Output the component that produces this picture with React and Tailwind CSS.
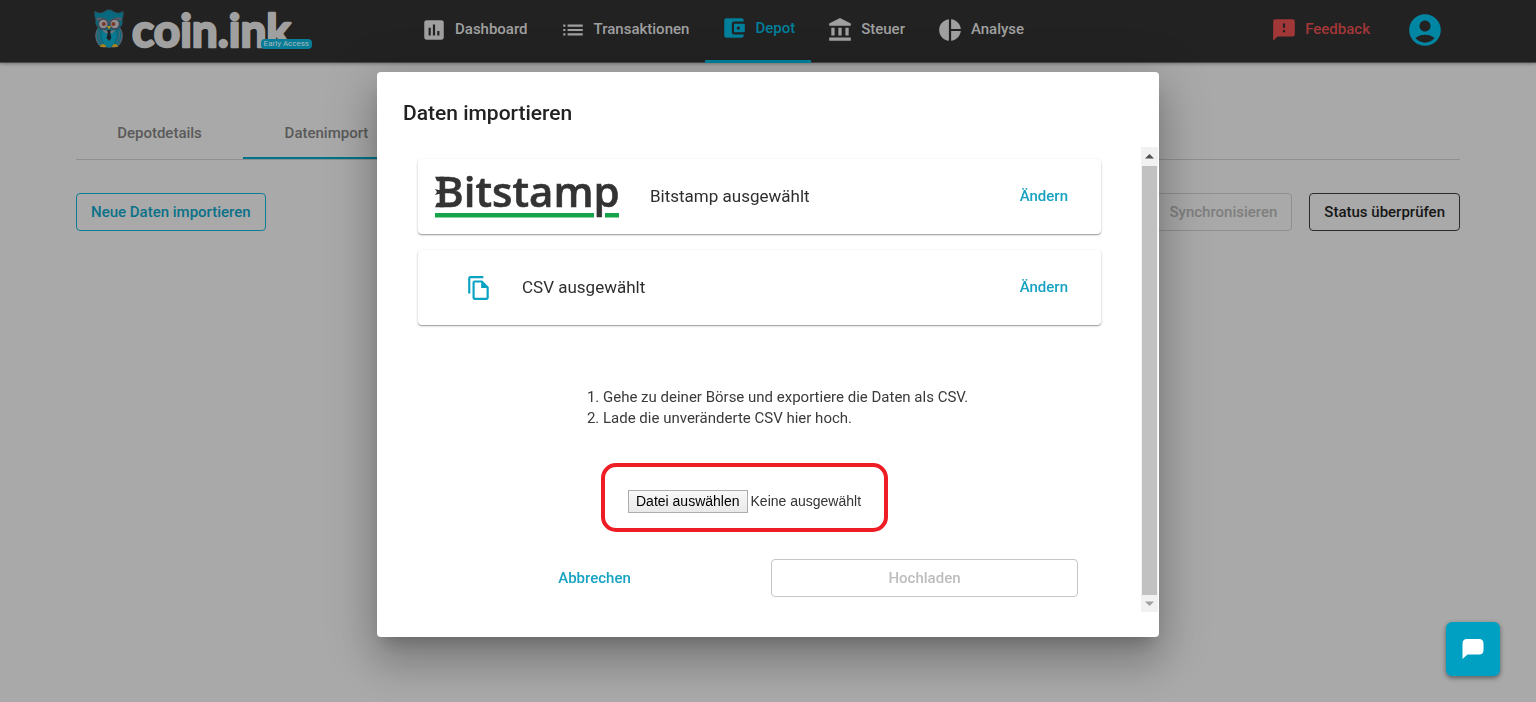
import {
  MdAssessment,
  MdList,
  MdAccountBalanceWallet,
  MdAccountBalance,
  MdPieChart,
  MdFeedback,
  MdAccountCircle,
  MdOutlineFileCopy,
} from "react-icons/md";

const NAV = [
  { label: "Dashboard", Icon: MdAssessment },
  { label: "Transaktionen", Icon: MdList },
  { label: "Depot", Icon: MdAccountBalanceWallet, active: true },
  { label: "Steuer", Icon: MdAccountBalance },
  { label: "Analyse", Icon: MdPieChart },
];

function Owl() {
  return (
    <svg viewBox="0 0 30 40" className="h-10 w-[30px] shrink-0" aria-hidden="true">
      <path d="M4 19c-3 6-3 12 1 17l4 2h12l4-2c4-5 4-11 1-17z" fill="#0b6a7e" stroke="#55606a" strokeWidth="1" />
      <path d="M1 2c3 3 6 2 9 1l3-2h4l3 2c3 1 6 2 9-1 .6 4-.3 7-1 9 1 4-1 8-5 9H7c-4-1-6-5-5-9C1 9 .4 6 1 2z" fill="#08687d" stroke="#2f4f5b" strokeWidth=".8" />
      <path d="M2 9c4-1 9-1 13 4 4-5 9-5 13-4-1 1-1 2-1 3-3-2-8-2-12 2-4-4-9-4-12-2 0-1 0-2-1-3z" fill="#5c5c66" />
      <circle cx="9.300" cy="15" r="4.800" fill="#8c8c92" stroke="#44444c" strokeWidth="1.200" />
      <circle cx="20.700" cy="15" r="4.800" fill="#8c8c92" stroke="#44444c" strokeWidth="1.200" />
      <circle cx="9.800" cy="15" r="2" fill="#7a3826" />
      <circle cx="19.400" cy="15" r="2" fill="#7a3826" />
      <path d="M12.800 17h4.400L15 20.500z" fill="#b08c1e" />
      <path d="M9 22c-3 5-1 12 6 17 7-5 9-12 6-17l-6-1z" fill="#087b92" />
      <path d="M8 21l7 1 7-1-4 3.500-3-1-3 1z" fill="#74747c" />
      <path d="M13.200 21h3.600l-.6 3 1.200 5-2.400 3-2.400-3 1.200-5z" fill="#1c2027" />
      <path d="M3 21c-2 5-1 10 3 14M27 21c2 5 1 10-3 14M5 22c-1 5 0 9 3 12M25 22c1 5 0 9-3 12" fill="none" stroke="#5d6670" strokeWidth=".9" />
      <path d="M6 38c0-2 1.500-3 3-3s3 1 3 3zM18 38c0-2 1.500-3 3-3s3 1 3 3z" fill="#a9841c" />
    </svg>
  );
}

function Logo() {
  return (
    <a href="#start" className="relative flex h-[49px] w-[218px] shrink-0 items-start gap-2 pt-[9px]">
      <Owl />
      <svg viewBox="0 0 180 44" className="-mt-1 h-11 w-[180px] shrink-0 overflow-visible" role="img" aria-label="coin.ink">
        <text
          x="0"
          y="42"
          fontFamily="Lato, sans-serif"
          fontWeight="700"
          fontSize="46"
          fill="#a0a0a0"
          stroke="#a0a0a0"
          strokeWidth="2.500"
          strokeLinejoin="round"
        >
          coin.ink
        </text>
      </svg>
      <span className="absolute right-0 bottom-0 rounded-sm bg-[#077d98] px-[3px] text-[8px] leading-[10px] font-normal text-[#a9b8bc]">
        Early Access
      </span>
    </a>
  );
}

function Header() {
  return (
    <header className="flex h-[63px] items-stretch gap-[94px] border-b border-[#4a4a4a] bg-[#222222] px-[94px] shadow-[0_1px_3px_rgba(0,0,0,0.3)]">
      <Logo />
      <nav className="-ml-px flex items-stretch">
        {NAV.map(({ label, Icon, active }) => (
          <a
            key={label}
            href={"#" + label.toLowerCase()}
            aria-current={active ? "page" : undefined}
            className={
              active
                ? "-mb-px flex items-center gap-2 border-b-3 border-[#007f9b] px-4 pb-1 text-[#007f9b]"
                : "flex items-center gap-2 px-4 pb-[3px] text-[#a0a0a0]"
            }
          >
            <Icon size={26} aria-hidden="true" />
            <span>{label}</span>
          </a>
        ))}
      </nav>
      <div className="ml-auto flex items-center gap-9 pb-[3px]">
        <a href="#feedback" className="flex items-center gap-2 text-[#a23738]">
          <MdFeedback size={26} aria-hidden="true" />
          Feedback
        </a>
        <button type="button" aria-label="Konto" className="-mr-[2px] text-[#0086a3]">
          <MdAccountCircle size={38} aria-hidden="true" />
        </button>
      </div>
    </header>
  );
}

function DepotPage() {
  return (
    <main className="px-[76px] pt-[45px]">
      <div role="tablist" className="flex border-b border-[#8f8f8f]">
        <button type="button" role="tab" aria-selected="false" className="h-[51px] w-[167px] text-[#5a5a5a]">
          Depotdetails
        </button>
        <button
          type="button"
          role="tab"
          aria-selected="true"
          className="h-[51px] w-[167px] border-b-2 border-[#007388] pt-[2px] text-[#5a5a5a]"
        >
          Datenimport
        </button>
      </div>
      <div className="mt-[33px] flex gap-[17px]">
        <button type="button" className="h-[38px] rounded border border-[#0d7d96] px-[14px] text-[#0a7189]">
          Neue Daten importieren
        </button>
        <button type="button" disabled className="ml-auto h-[38px] rounded border border-[#8f8f8f] px-[14px] text-[#7e7e7e]">
          Synchronisieren
        </button>
        <button type="button" className="h-[38px] rounded border border-[#2c2c2c] px-[14px] text-[#161616]">
          Status überprüfen
        </button>
      </div>
    </main>
  );
}

function BitstampLogo() {
  return (
    <svg viewBox="0 0 185 43" className="h-[43px] w-[185px] shrink-0 overflow-visible" role="img" aria-label="Bitstamp">
      <text x="1" y="32" fontFamily="'Open Sans', sans-serif" fontWeight="600" fontSize="42" fill="#333333" stroke="#333333" strokeWidth=".6">
        Bitstamp
      </text>
      <path d="M0 1.700h9v4.500H2zM0 14l3.500 1H9v4H3.500L0 20l2-3zM2 27.800h7v4.500H0z" fill="#333333" />
      <path d="M0 38h159v4.500H0zM170 38h14v4.500h-14z" fill="#17a34a" />
    </svg>
  );
}

function SelectionCard({ children }) {
  return (
    <section className="flex h-[75px] items-center rounded bg-white pr-[33px] pl-[17px] text-[17px] font-normal text-[#2e2e2e] shadow-[0_1px_1px_rgba(0,0,0,0.28),0_1px_3px_rgba(0,0,0,0.18)]">
      {children}
      <button type="button" className="ml-auto text-[15px] font-medium text-[#17a2c2]">
        Ändern
      </button>
    </section>
  );
}

function ScrollBar() {
  return (
    <div aria-hidden="true" className="mr-px flex w-[17px] shrink-0 flex-col items-center bg-[#f1f1f1]">
      <svg viewBox="0 0 17 19" className="h-[19px] w-[17px]">
        <path d="M4 11.500L8.500 7l4.500 4.500z" fill="#505050" />
      </svg>
      <div className="w-[15px] flex-1 bg-[#c1c1c1]" />
      <svg viewBox="0 0 17 17" className="h-[17px] w-[17px]">
        <path d="M4 6.500L8.500 11l4.500-4.500z" fill="#a0a0a0" />
      </svg>
    </div>
  );
}

function ImportDialog() {
  return (
    <div className="fixed inset-0 flex items-start justify-center px-4 pt-[72px]">
      <div
        role="dialog"
        aria-modal="true"
        aria-labelledby="dialog-title"
        className="w-full max-w-[782px] rounded bg-white pb-[25px] shadow-[0_12px_16px_-7px_rgba(0,0,0,0.2),0_26px_40px_3px_rgba(0,0,0,0.16),0_10px_50px_9px_rgba(0,0,0,0.14)]"
      >
        <h2 id="dialog-title" className="px-[26px] pt-[25px] pb-[18px] text-[21px] leading-8 font-medium text-[#222222]">
          Daten importieren
        </h2>
        <div className="flex">
          <div className="flex flex-1 flex-col pt-3 pr-10 pb-[15px] pl-[41px]">
            <div className="flex flex-col gap-4">
              <SelectionCard>
                <BitstampLogo />
                <span className="pl-[30px]">Bitstamp ausgewählt</span>
              </SelectionCard>
              <SelectionCard>
                <MdOutlineFileCopy size={26} className="ml-[31px] text-[#0aa3c4]" aria-hidden="true" />
                <span className="pl-[30px]">CSV ausgewählt</span>
              </SelectionCard>
            </div>
            <ol className="mt-[62px] ml-[185px] list-decimal text-[15px] leading-[21px] font-normal text-[#3a3a3a]">
              <li>Gehe zu deiner Börse und exportiere die Daten als CSV.</li>
              <li>Lade die unveränderte CSV hier hoch.</li>
            </ol>
            <div className="mt-[34px] ml-[183px] flex h-[69px] items-center self-start rounded-[15px] border-4 border-[#ee1c25] px-[23px] pt-2 font-['Liberation_Sans',sans-serif] text-[14px] font-normal text-[#333333]">
              <input id="csv-file" type="file" accept=".csv" className="sr-only" />
              <label htmlFor="csv-file" className="flex items-center gap-[3px]">
                <span className="border border-[#adadad] bg-linear-to-b from-[#f8f8f8] to-[#e9e9e9] px-[7px] leading-[21px] text-black">
                  Datei auswählen
                </span>
                <span>Keine ausgewählt</span>
              </label>
            </div>
            <div className="mt-[27px] grid grid-cols-2 gap-[23px] px-[23px]">
              <button type="button" className="h-[38px] text-[#17a2c2]">
                Abbrechen
              </button>
              <button type="button" disabled className="h-[38px] rounded border border-[#c6c6c6] text-[#bdbdbd]">
                Hochladen
              </button>
            </div>
          </div>
          <ScrollBar />
        </div>
      </div>
    </div>
  );
}

function ChatButton() {
  return (
    <button
      type="button"
      aria-label="Chat öffnen"
      className="fixed right-9 bottom-[26px] flex size-[54px] items-center justify-center rounded-md bg-[#00a0c2] shadow-[0_2px_5px_rgba(0,0,0,0.45)]"
    >
      <svg viewBox="0 0 22 20" className="h-5 w-[22px]" aria-hidden="true">
        <path d="M5 0h12q4.500 0 4.500 4.500v6.500q0 4.500-4.500 4.500H5.500L.5 20V4.500Q.5 0 5 0z" fill="#ffffff" />
      </svg>
    </button>
  );
}

export default function App() {
  return (
    <div className="min-h-screen bg-[#a9a9a9] font-[Roboto,sans-serif] text-[15px] font-medium">
      <Header />
      <DepotPage />
      <ImportDialog />
      <ChatButton />
    </div>
  );
}
